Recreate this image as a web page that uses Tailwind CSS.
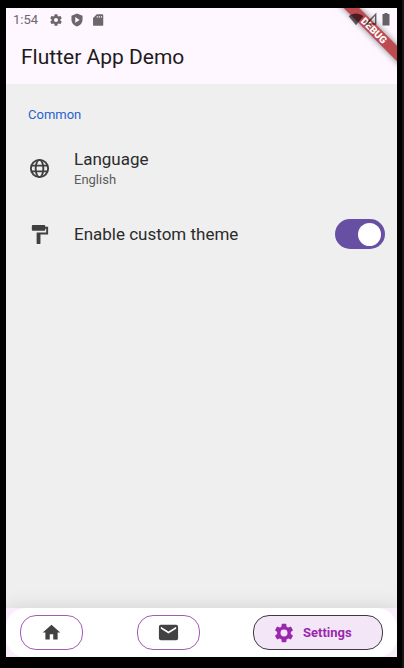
<!DOCTYPE html>
<html lang="en">
<head>
<meta charset="utf-8">
<meta name="viewport" content="width=device-width, initial-scale=1">
<title>Flutter App Demo</title>
<script src="https://cdn.jsdelivr.net/npm/@tailwindcss/browser@4"></script>
</head>
<body class="bg-black font-[Roboto,sans-serif]">
<div class="flex h-screen flex-col border-r-2 border-[#171714] pt-2 pr-[5px] pb-[11px] pl-1.5">
  <div class="relative flex min-h-0 flex-1 flex-col overflow-hidden bg-[#efefef]">

    <header class="bg-[#fef7ff] text-[#1d1b20]">
      <div class="flex h-6 items-center px-[7px] text-[#6b676b]">
        <span class="w-9 text-[13px] leading-6">1:54</span>
        <svg class="size-3.5" viewBox="0 0 24 24" fill="currentColor" aria-hidden="true"><path fill-rule="evenodd" d="M19.43 12.98c.04-.32.07-.64.07-.98s-.03-.66-.07-.98l2.11-1.65a.5.5 0 0 0 .12-.64l-2-3.46a.5.5 0 0 0-.61-.22l-2.49 1c-.52-.4-1.08-.73-1.69-.98l-.38-2.65A.49.49 0 0 0 14 2h-4a.49.49 0 0 0-.49.42l-.38 2.65c-.61.25-1.17.59-1.69.98l-2.49-1a.49.49 0 0 0-.61.22l-2 3.46a.49.49 0 0 0 .12.64l2.11 1.65c-.04.32-.07.65-.07.98s.03.66.07.98l-2.11 1.65a.5.5 0 0 0-.12.64l2 3.46c.12.22.39.3.61.22l2.49-1c.52.4 1.08.73 1.69.98l.38 2.65c.03.24.24.42.49.42h4c.25 0 .46-.18.49-.42l.38-2.65c.61-.25 1.17-.59 1.69-.98l2.49 1c.23.09.49 0 .61-.22l2-3.46a.5.5 0 0 0-.12-.64zM12 15.500a3.500 3.500 0 1 1 0-7 3.500 3.500 0 0 1 0 7z"/></svg>
        <svg class="ml-[7px] size-3.5" viewBox="0 0 24 24" fill="currentColor" aria-hidden="true"><path fill-rule="evenodd" d="M12 1 2.500 4.500V11c0 5.500 4 10.500 9.500 12 5.500-1.500 9.500-6.500 9.500-12V4.500zM9 7l7.500 4.800L9 16.500z"/></svg>
        <svg class="ml-[7px] size-3.5" viewBox="0 0 24 24" fill="currentColor" aria-hidden="true"><path fill-rule="evenodd" d="M19 2H10L3.500 8.500V20a2 2 0 0 0 2 2H19a2 2 0 0 0 2-2V4a2 2 0 0 0-2-2zM10 5h1.500v3H10zM13.500 5H15v3h-1.500zM17 5h1.500v3H17z"/></svg>
      </div>
      <h1 class="flex h-[52px] items-start px-[15px] pt-[11px] text-[21px] leading-7">Flutter App Demo</h1>
    </header>

    <div class="absolute top-0 right-0 size-20 overflow-hidden">
      <div class="absolute top-[17px] left-[-3px] flex h-[11px] w-[120px] rotate-45 items-center justify-center bg-[#bd4a50] text-[10px] leading-none font-black text-white shadow-[0_0_6px_rgba(0,0,0,0.5)]">DEBUG</div>
    </div>
    <div class="absolute top-1 right-[7px] flex items-center text-black/60">
      <svg class="h-3.5 w-4" viewBox="0 0 24 21" fill="currentColor" aria-hidden="true"><path d="M12 20 1 6.500C7 1 17 1 23 6.500z"/></svg>
      <svg class="size-3.5" viewBox="0 0 24 24" fill="none" stroke="currentColor" stroke-width="2.500" aria-hidden="true"><path d="M4 20.500 20 4v16.500z"/></svg>
      <svg class="ml-1 h-3.5 w-2" viewBox="0 0 8 14" fill="currentColor" aria-hidden="true"><path d="M2.500 1h3v1H7.500v11.500h-7V2h2z"/></svg>
    </div>

    <main class="flex-1">
      <h2 class="px-[22px] pt-[21px] text-[13px] leading-5 text-[#2a62cc]">Common</h2>
      <a href="#language" class="mt-[13px] flex h-[60px] items-center px-[22px] text-[#404040]">
        <svg class="size-[23px]" viewBox="0 0 24 24" fill="none" stroke="currentColor" stroke-width="2" aria-hidden="true"><circle cx="12" cy="12" r="9"/><ellipse cx="12" cy="12" rx="4" ry="9"/><path d="M3.600 9h16.800M3.600 15h16.800"/></svg>
        <span class="ml-[23px] flex flex-col">
          <span class="text-[17px] leading-6 text-[#2b2b2b]">Language</span>
          <span class="text-[13px] leading-[18px] text-[#5c5c5c]">English</span>
        </span>
      </a>
      <div class="mt-[5px] flex h-[62px] items-center pr-3 pl-[22px] text-[#404040]">
        <svg class="size-[23px]" viewBox="0 0 24 24" fill="currentColor" aria-hidden="true"><path d="M18 4V3a1 1 0 0 0-1-1H5a1 1 0 0 0-1 1v4a1 1 0 0 0 1 1h12a1 1 0 0 0 1-1V6h1v4H9v11a1 1 0 0 0 1 1h2a1 1 0 0 0 1-1v-9h8V4z"/></svg>
        <label for="theme" class="ml-[23px] flex-1 text-[17px] leading-6 text-[#2b2b2b]">Enable custom theme</label>
        <input id="theme" type="checkbox" role="switch" checked class="flex h-[30px] w-[50px] appearance-none items-center rounded-full bg-gray-400 px-1 before:size-[23px] before:rounded-full before:bg-white checked:justify-end checked:bg-[#6750a4]">
      </div>
    </main>

    <div class="bg-[#f9effb] shadow-[0_0_20px_rgba(0,0,0,0.13)]">
      <nav class="flex h-[49px] items-center justify-between rounded-[20px] bg-white px-3.5 text-[#424242]" aria-label="Main">
        <button class="flex h-[35px] w-[63px] items-center justify-center rounded-2xl border border-[#a45bb4]" aria-label="Home">
          <svg class="size-[21px]" viewBox="0 0 24 24" fill="currentColor" aria-hidden="true"><path d="M10 20v-6h4v6h5v-8h3L12 3 2 12h3v8z"/></svg>
        </button>
        <button class="flex h-[35px] w-[63px] items-center justify-center rounded-2xl border border-[#a45bb4]" aria-label="Mail">
          <svg class="size-[23px]" viewBox="0 0 24 24" fill="currentColor" aria-hidden="true"><path d="M20 4H4a2 2 0 0 0-2 2v12c0 1.100.9 2 2 2h16a2 2 0 0 0 2-2V6a2 2 0 0 0-2-2zm0 4-8 5-8-5V6l8 5 8-5z"/></svg>
        </button>
        <button class="flex h-[35px] w-[130px] items-center gap-2 rounded-2xl border border-[#403844] bg-[#f3e6f6] pl-[19px] text-[13px] leading-5 font-bold text-[#9a28ae]" aria-current="page">
          <svg class="size-[22px]" viewBox="0 0 24 24" fill="currentColor" aria-hidden="true"><path fill-rule="evenodd" d="M19.430 12.980c.04-.32.07-.64.07-.98s-.03-.66-.07-.98l2.110-1.650a.5.5 0 0 0 .12-.64l-2-3.460a.5.5 0 0 0-.61-.22l-2.490 1c-.52-.4-1.080-.73-1.690-.98l-.38-2.650A.49.49 0 0 0 14 2h-4a.49.49 0 0 0-.49.42l-.38 2.650c-.61.25-1.170.59-1.690.98l-2.490-1a.49.49 0 0 0-.61.22l-2 3.460a.49.49 0 0 0 .12.64l2.110 1.650c-.04.32-.07.65-.07.98s.03.66.07.98l-2.110 1.650a.5.5 0 0 0-.12.64l2 3.460c.12.22.39.3.61.22l2.490-1c.52.4 1.080.73 1.690.98l.38 2.650c.03.24.24.42.49.42h4c.25 0 .46-.18.49-.42l.38-2.650c.61-.25 1.170-.59 1.690-.98l2.490 1c.23.09.49 0 .61-.22l2-3.460a.5.5 0 0 0-.12-.64zM12 15.800a3.800 3.800 0 1 1 0-7.600 3.800 3.800 0 0 1 0 7.600z"/></svg>
          <span>Settings</span>
        </button>
      </nav>
    </div>
  </div>
</div>
</body>
</html>
